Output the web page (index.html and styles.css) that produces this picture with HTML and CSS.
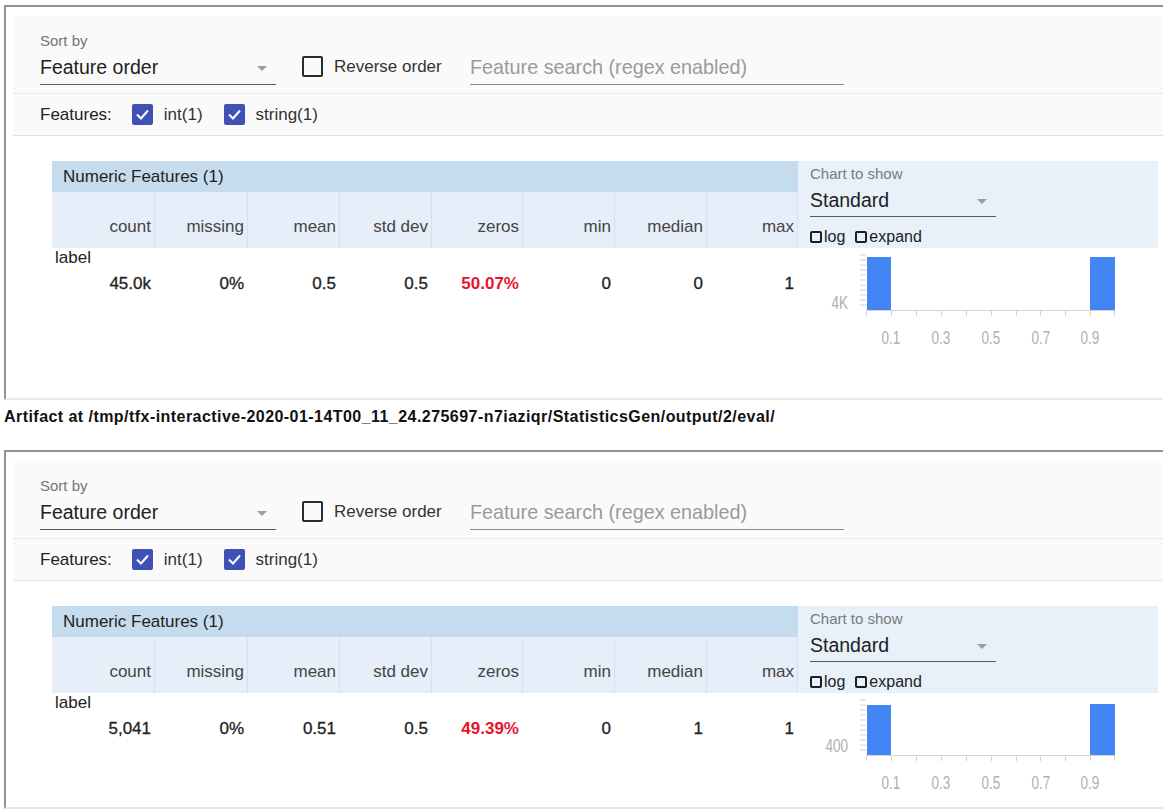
FILE: index.html
```html
<!DOCTYPE html>
<html>
<head>
<meta charset="utf-8">
<title>Statistics</title>
<link rel="stylesheet" href="styles.css">
</head>
<body>
<div class="page">
  <section class="frame frame-train">
    <div class="controls">
      <div class="toolbar">
        <div class="dropdown sort-dd">
          <div class="dd-label">Sort by</div>
          <div class="dd-value"><span>Feature order</span><span class="caret"></span></div>
        </div>
        <div class="reverse"><span class="box"></span><span>Reverse order</span></div>
        <div class="search">Feature search (regex enabled)</div>
      </div>
      <div class="feature-filter">
        <span class="ff-title">Features:</span>
        <span class="chk"><svg class="chk-box" viewBox="0 0 21 21"><rect width="21" height="21" rx="2"/><polyline points="5,10.5 9,14.5 16,6.5"/></svg>int(1)</span>
        <span class="chk"><svg class="chk-box" viewBox="0 0 21 21"><rect width="21" height="21" rx="2"/><polyline points="5,10.5 9,14.5 16,6.5"/></svg>string(1)</span>
      </div>
    </div>
    <div class="stats-wrap">
      <div class="stats">
        <div class="stats-title">Numeric Features (1)</div>
        <div class="stats-grid stats-head">
          <div>count</div><div>missing</div><div>mean</div><div>std dev</div><div>zeros</div><div>min</div><div>median</div><div>max</div>
        </div>
        <div class="feature-name">label</div>
        <div class="stats-grid stats-values">
          <div>45.0k</div><div>0%</div><div>0.5</div><div>0.5</div><div class="warn">50.07%</div><div>0</div><div>0</div><div>1</div>
        </div>
      </div>
      <div class="chart-col">
        <div class="chart-controls">
          <div class="dd-label">Chart to show</div>
          <div class="dd-value chart-dd"><span>Standard</span><span class="caret"></span></div>
          <div class="chart-opts">
            <span class="opt"><span class="mini-box"></span>log</span>
            <span class="opt"><span class="mini-box"></span>expand</span>
          </div>
        </div>
        <svg class="hist" viewBox="0 0 360 108" width="360" height="108">
          <g class="ticks">
            <line x1="62" y1="7" x2="68" y2="7"/><line x1="62" y1="12" x2="68" y2="12"/><line x1="62" y1="17" x2="68" y2="17"/><line x1="62" y1="22" x2="68" y2="22"/><line x1="62" y1="27" x2="68" y2="27"/><line x1="62" y1="32" x2="68" y2="32"/><line x1="62" y1="37" x2="68" y2="37"/><line x1="62" y1="42" x2="68" y2="42"/><line x1="62" y1="47" x2="68" y2="47"/><line x1="62" y1="52" x2="68" y2="52"/><line x1="62" y1="57" x2="68" y2="57"/>
            <line x1="68.5" y1="62" x2="68.5" y2="68"/><line x1="93.5" y1="62" x2="93.5" y2="68"/><line x1="118.5" y1="62" x2="118.5" y2="68"/><line x1="143.5" y1="62" x2="143.5" y2="68"/><line x1="168.5" y1="62" x2="168.5" y2="68"/><line x1="193.5" y1="62" x2="193.5" y2="68"/><line x1="218.5" y1="62" x2="218.5" y2="68"/><line x1="242.5" y1="62" x2="242.5" y2="68"/><line x1="267.5" y1="62" x2="267.5" y2="68"/><line x1="292.5" y1="62" x2="292.5" y2="68"/><line x1="316.5" y1="62" x2="316.5" y2="68"/>
            <line x1="68" y1="62.5" x2="317" y2="62.5"/>
          </g>
          <rect class="bar" x="69" y="9" width="24" height="53"/>
          <rect class="bar" x="292" y="9" width="25" height="53"/>
          <g class="axis-text">
            <text transform="translate(50 61) scale(1 1.4)" text-anchor="end">4K</text>
            <text transform="translate(93 96) scale(1 1.4)" text-anchor="middle">0.1</text>
            <text transform="translate(143 96) scale(1 1.4)" text-anchor="middle">0.3</text>
            <text transform="translate(193 96) scale(1 1.4)" text-anchor="middle">0.5</text>
            <text transform="translate(243 96) scale(1 1.4)" text-anchor="middle">0.7</text>
            <text transform="translate(292 96) scale(1 1.4)" text-anchor="middle">0.9</text>
          </g>
        </svg>
      </div>
    </div>
  </section>

  <p class="artifact">Artifact at /tmp/tfx-interactive-2020-01-14T00_11_24.275697-n7iaziqr/StatisticsGen/output/2/eval/</p>

  <section class="frame frame-eval">
    <div class="controls">
      <div class="toolbar">
        <div class="dropdown sort-dd">
          <div class="dd-label">Sort by</div>
          <div class="dd-value"><span>Feature order</span><span class="caret"></span></div>
        </div>
        <div class="reverse"><span class="box"></span><span>Reverse order</span></div>
        <div class="search">Feature search (regex enabled)</div>
      </div>
      <div class="feature-filter">
        <span class="ff-title">Features:</span>
        <span class="chk"><svg class="chk-box" viewBox="0 0 21 21"><rect width="21" height="21" rx="2"/><polyline points="5,10.5 9,14.5 16,6.5"/></svg>int(1)</span>
        <span class="chk"><svg class="chk-box" viewBox="0 0 21 21"><rect width="21" height="21" rx="2"/><polyline points="5,10.5 9,14.5 16,6.5"/></svg>string(1)</span>
      </div>
    </div>
    <div class="stats-wrap">
      <div class="stats">
        <div class="stats-title">Numeric Features (1)</div>
        <div class="stats-grid stats-head">
          <div>count</div><div>missing</div><div>mean</div><div>std dev</div><div>zeros</div><div>min</div><div>median</div><div>max</div>
        </div>
        <div class="feature-name">label</div>
        <div class="stats-grid stats-values">
          <div>5,041</div><div>0%</div><div>0.51</div><div>0.5</div><div class="warn">49.39%</div><div>0</div><div>1</div><div>1</div>
        </div>
      </div>
      <div class="chart-col">
        <div class="chart-controls">
          <div class="dd-label">Chart to show</div>
          <div class="dd-value chart-dd"><span>Standard</span><span class="caret"></span></div>
          <div class="chart-opts">
            <span class="opt"><span class="mini-box"></span>log</span>
            <span class="opt"><span class="mini-box"></span>expand</span>
          </div>
        </div>
        <svg class="hist" viewBox="0 0 360 108" width="360" height="108">
          <g class="ticks">
            <line x1="62" y1="7" x2="68" y2="7"/><line x1="62" y1="12" x2="68" y2="12"/><line x1="62" y1="17" x2="68" y2="17"/><line x1="62" y1="22" x2="68" y2="22"/><line x1="62" y1="27" x2="68" y2="27"/><line x1="62" y1="32" x2="68" y2="32"/><line x1="62" y1="37" x2="68" y2="37"/><line x1="62" y1="42" x2="68" y2="42"/><line x1="62" y1="47" x2="68" y2="47"/><line x1="62" y1="52" x2="68" y2="52"/><line x1="62" y1="57" x2="68" y2="57"/>
            <line x1="68.5" y1="62" x2="68.5" y2="68"/><line x1="93.5" y1="62" x2="93.5" y2="68"/><line x1="118.5" y1="62" x2="118.5" y2="68"/><line x1="143.5" y1="62" x2="143.5" y2="68"/><line x1="168.5" y1="62" x2="168.5" y2="68"/><line x1="193.5" y1="62" x2="193.5" y2="68"/><line x1="218.5" y1="62" x2="218.5" y2="68"/><line x1="242.5" y1="62" x2="242.5" y2="68"/><line x1="267.5" y1="62" x2="267.5" y2="68"/><line x1="292.5" y1="62" x2="292.5" y2="68"/><line x1="316.5" y1="62" x2="316.5" y2="68"/>
            <line x1="68" y1="62.5" x2="317" y2="62.5"/>
          </g>
          <rect class="bar" x="69" y="12" width="24" height="50"/>
          <rect class="bar" x="292" y="11" width="25" height="51"/>
          <g class="axis-text">
            <text transform="translate(50 59) scale(1 1.4)" text-anchor="end">400</text>
            <text transform="translate(93 96) scale(1 1.4)" text-anchor="middle">0.1</text>
            <text transform="translate(143 96) scale(1 1.4)" text-anchor="middle">0.3</text>
            <text transform="translate(193 96) scale(1 1.4)" text-anchor="middle">0.5</text>
            <text transform="translate(243 96) scale(1 1.4)" text-anchor="middle">0.7</text>
            <text transform="translate(292 96) scale(1 1.4)" text-anchor="middle">0.9</text>
          </g>
        </svg>
      </div>
    </div>
  </section>
</div>
</body>
</html>
```

FILE: styles.css
```css
html, body {
  margin: 0;
  padding: 0;
  background: #ffffff;
  overflow: hidden;
}

body {
  font-family: "Liberation Sans", Arial, Helvetica, sans-serif;
  color: #222222;
}

.page {
  padding: 5px 0 0 4px;
}

.frame {
  box-sizing: border-box;
  width: 1190px;
  border-style: solid;
  border-width: 2px;
  border-color: #939393 #e9e9e9 #e9e9e9 #939393;
  padding: 9px 0 0 7px;
  overflow: hidden;
}

.frame-train {
  height: 395px;
}

.frame-eval {
  height: 359px;
}

/* ---------- top controls ---------- */
.controls {
  background: #fafafa;
}

.toolbar {
  display: flex;
  align-items: flex-start;
  height: 77px;
  padding-left: 27px;
  border-bottom: 1px solid #e8e8e8;
}

.dropdown {
  padding-top: 16px;
}

.sort-dd {
  width: 236px;
}

.dd-label {
  font-size: 15px;
  line-height: 18px;
  color: #757575;
}

.dd-value {
  display: flex;
  align-items: center;
  justify-content: space-between;
  padding: 5px 9px 5px 0;
  font-size: 19.5px;
  line-height: 24px;
  color: #212121;
  border-bottom: 1px solid #5a5a5a;
}

.caret {
  width: 0;
  height: 0;
  border-left: 5.5px solid transparent;
  border-right: 5.5px solid transparent;
  border-top: 5px solid #9e9e9e;
  margin-top: 2px;
}

.reverse {
  box-sizing: border-box;
  width: 168px;
  display: flex;
  align-items: center;
  margin: 40px 0 0 26px;
  font-size: 17px;
  line-height: 21px;
  color: #333333;
}

.box {
  box-sizing: border-box;
  width: 21px;
  height: 21px;
  border: 2px solid #2b2b2b;
  border-radius: 2px;
  margin-right: 11px;
}

.search {
  box-sizing: border-box;
  width: 374px;
  margin-top: 34px;
  padding: 5px 0;
  font-size: 19.8px;
  line-height: 24px;
  color: #9a9a9a;
  border-bottom: 1px solid #8a8a8a;
}

.feature-filter {
  display: flex;
  align-items: center;
  height: 41px;
  padding-left: 27px;
  border-bottom: 1px solid #e3e3e3;
  font-size: 17px;
  color: #222222;
}

.ff-title {
  margin-right: 20px;
}

.chk {
  display: flex;
  align-items: center;
  margin-right: 21px;
  color: #333333;
}

.chk-box {
  width: 21px;
  height: 21px;
  margin-right: 11px;
}

.chk-box rect {
  fill: #3f51b5;
}

.chk-box polyline {
  fill: none;
  stroke: #ffffff;
  stroke-width: 2;
}

/* ---------- stats table ---------- */
.stats-wrap {
  display: flex;
  margin: 25px 0 0 39px;
}

.stats {
  width: 746px;
}

.stats-title {
  height: 31px;
  line-height: 31px;
  padding-left: 11px;
  background: #c5dcef;
  font-size: 17px;
  color: #222222;
}

.stats-grid {
  display: grid;
  grid-template-columns: 103px 93px 92px 92px 91px 92px 92px 91px;
  font-size: 17px;
  line-height: 20px;
}

.stats-head {
  background: #e6eff9;
  color: #444444;
}

.stats-head > div {
  box-sizing: border-box;
  height: 56px;
  padding: 25px 3px 11px 0;
  text-align: right;
  border-right: 1px solid #d4e2ef;
}

.feature-name {
  padding-left: 3px;
  font-size: 17px;
  line-height: 20px;
  color: #222222;
}

.stats-values {
  margin-top: 6px;
  color: #222222;
}

.stats-values > div {
  padding-right: 4px;
  text-align: right;
  -webkit-text-stroke: 0.3px #222222;
}

.stats-values > .warn {
  color: #e8142c;
  font-weight: bold;
  -webkit-text-stroke: 0;
}

/* ---------- chart column ---------- */
.chart-col {
  width: 360px;
}

.chart-controls {
  box-sizing: border-box;
  height: 87px;
  padding: 4px 0 0 12px;
  background: #e8f1f9;
}

.chart-controls .dd-label {
  color: #7a7a7a;
}

.chart-dd {
  width: 186px;
  box-sizing: border-box;
  padding-bottom: 4px;
}

.chart-opts {
  display: flex;
  align-items: center;
  margin-top: 10px;
  font-size: 16px;
  line-height: 20px;
  color: #222222;
}

.opt {
  display: flex;
  align-items: center;
  margin-right: 10px;
}

.mini-box {
  box-sizing: border-box;
  width: 12px;
  height: 12px;
  border: 2px solid #1f1f1f;
  border-radius: 2px;
  margin-right: 2px;
}

.hist {
  display: block;
}

.hist .ticks line {
  stroke: #d4d4d4;
  stroke-width: 1;
}

.hist .bar {
  fill: #4285f4;
}

.hist .axis-text text {
  font-family: "Liberation Sans", Arial, sans-serif;
  font-size: 13.5px;
  fill: #b0b0b0;
}

/* ---------- artifact caption ---------- */
.artifact {
  margin: 8px 0 24px 0;
  font-size: 16px;
  line-height: 18px;
  letter-spacing: 0.45px;
  font-weight: bold;
  color: #111111;
}
```
